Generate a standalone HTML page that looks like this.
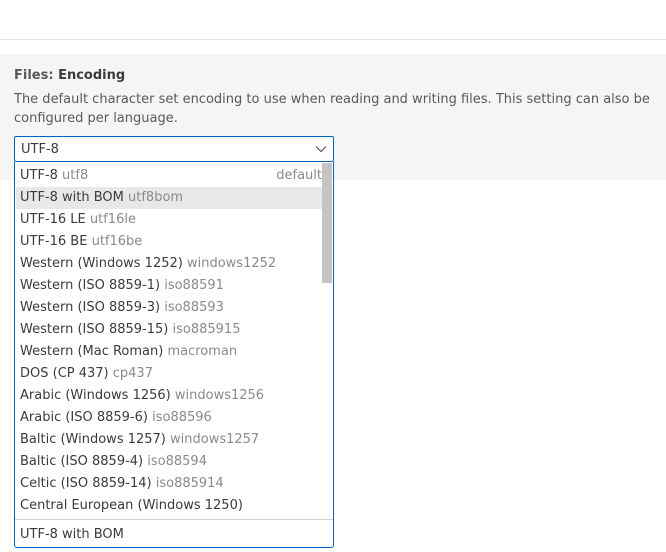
<!DOCTYPE html>
<html><head><style>
body{margin:0;width:666px;height:552px;background:#fff;font-family:"DejaVu Sans",sans-serif;font-size:13px;color:#3b3b3b;position:relative;overflow:hidden}
.topline{position:absolute;left:0;top:39px;width:666px;height:1px;background:#e5e5e5}
.panel{position:absolute;left:0;top:54px;width:666px;height:126px;background:#f5f5f5}
.title{position:absolute;left:14px;top:68px;font-weight:bold;color:#3b3b3b}
.title span{color:#595959}
.desc{position:absolute;left:14px;top:90px;width:645px;line-height:19px;color:#595959}
.sel{position:absolute;left:14px;top:136px;width:318px;height:24px;border:1px solid #0067c0;border-radius:2px;background:#fff;box-sizing:content-box}
.sel .v{position:absolute;left:6px;top:5px}
.sel svg{position:absolute;right:6px;top:8px}
.dd{position:absolute;left:14px;top:162px;width:318px;height:385px;border:1px solid #0067c0;border-top:none;border-radius:0 0 3px 3px;background:#fff}
.it{position:absolute;left:1px;width:306px;height:22px;line-height:22px;padding-left:4px;white-space:nowrap}
.it i{font-style:normal;color:#8a8a8a}
.hl{background:#e8e8e8}
.sb{position:absolute;left:307px;top:1px;width:10px;height:120px;background:#c4c4c4}
.sep{position:absolute;left:0;top:357px;width:318px;height:1px;background:#d0d0d0}
</style></head><body>
<div class="topline"></div>
<div class="panel"></div>
<div class="title"><span>Files: </span>Encoding</div>
<div class="desc">The default character set encoding to use when reading and writing files. This setting can also be configured per language.</div>
<div class="sel"><div class="v">UTF-8</div><svg width="12" height="8" viewBox="0 0 12 8"><path d="M1 1.5l5 5 5-5" fill="none" stroke="#555" stroke-width="1.2"/></svg></div>
<div class="dd">
<div class="it" style="top:1px">UTF-8 <i>utf8</i><i style="position:absolute;right:4px">default</i></div>
<div class="it hl" style="top:23px">UTF-8 with BOM <i>utf8bom</i></div>
<div class="it" style="top:45px">UTF-16 LE <i>utf16le</i></div>
<div class="it" style="top:67px">UTF-16 BE <i>utf16be</i></div>
<div class="it" style="top:89px">Western (Windows 1252) <i>windows1252</i></div>
<div class="it" style="top:111px">Western (ISO 8859-1) <i>iso88591</i></div>
<div class="it" style="top:133px">Western (ISO 8859-3) <i>iso88593</i></div>
<div class="it" style="top:155px">Western (ISO 8859-15) <i>iso885915</i></div>
<div class="it" style="top:177px">Western (Mac Roman) <i>macroman</i></div>
<div class="it" style="top:199px">DOS (CP 437) <i>cp437</i></div>
<div class="it" style="top:221px">Arabic (Windows 1256) <i>windows1256</i></div>
<div class="it" style="top:243px">Arabic (ISO 8859-6) <i>iso88596</i></div>
<div class="it" style="top:265px">Baltic (Windows 1257) <i>windows1257</i></div>
<div class="it" style="top:287px">Baltic (ISO 8859-4) <i>iso88594</i></div>
<div class="it" style="top:309px">Celtic (ISO 8859-14) <i>iso885914</i></div>
<div class="it" style="top:331px">Central European (Windows 1250)</div>
<div class="sb"></div>
<div class="sep"></div>
<div class="it" style="top:360px">UTF-8 with BOM</div>
</div>
<style>.dd .it{margin-top:2px}</style>
</body></html>
